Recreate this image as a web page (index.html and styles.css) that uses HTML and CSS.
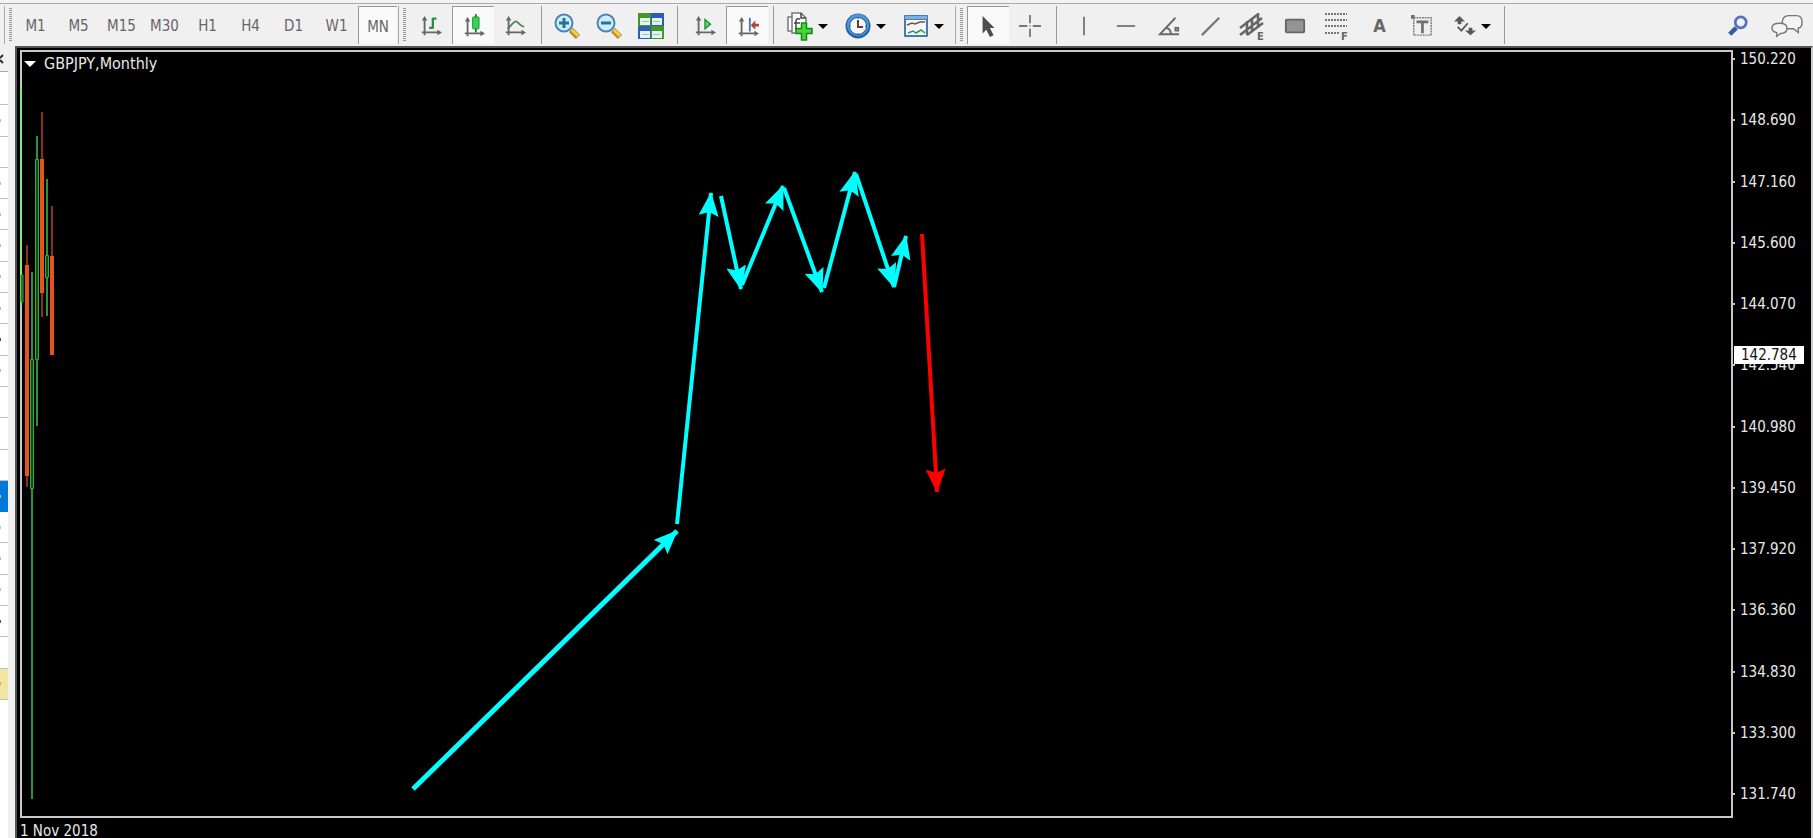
FILE: index.html
```html
<!DOCTYPE html>
<html lang="en">
<head>
<meta charset="utf-8">
<title>GBPJPY,Monthly</title>
<link rel="stylesheet" href="styles.css">
</head>
<body>
<header class="toolbar">
  <div class="grip"></div>
  <div class="group periods">
    <button>M1</button><button>M5</button><button>M15</button><button>M30</button><button>H1</button><button>H4</button><button>D1</button><button>W1</button><button class="pressed" aria-pressed="true">MN</button>
  </div>
  <div class="grip"></div>
  <div class="group charts">
    <button aria-label="Bar chart"><svg viewBox="0 0 24 24"><g class="axes"><path d="M5 22V5M2 19H20"/><path d="M5 1L2 6H8ZM24 19L19 16V22Z"/></g><path d="M14 3V15M14 4H18M10 14H14" stroke="#2e8b45" stroke-width="2.500" fill="none"/></svg></button>
    <button class="pressed" aria-pressed="true" aria-label="Candlesticks"><svg viewBox="0 0 24 24"><g class="axes"><path d="M5 22V5M2 19H20"/><path d="M5 1L2 6H8ZM24 19L19 16V22Z"/></g><path d="M14 -2V18" stroke="#1d7a2c" stroke-width="2"/><rect x="10.5" y="1" width="7" height="13" rx="1" fill="#35d552" stroke="#149029"/></svg></button>
    <button aria-label="Line chart"><svg viewBox="0 0 24 24"><g class="axes"><path d="M5 22V5M2 19H20"/><path d="M5 1L2 6H8ZM24 19L19 16V22Z"/></g><path d="M4 15C9 10 11 7 13 7S17 12 22 13" stroke="#508458" stroke-width="2" fill="none"/></svg></button>
    <div class="rule"></div>
    <button aria-label="Zoom in"><svg class="large" viewBox="0 0 26 26"><path d="M17 17L24 24" stroke="#b98a20" stroke-width="6"/><path d="M18 17L24 23" stroke="#f6cf50" stroke-width="3"/><circle cx="10" cy="10" r="8.5" fill="#c5f0ff" stroke="#5080b8" stroke-width="2"/><path d="M10 5V15M5 10H15" stroke="#356d96" stroke-width="3"/></svg></button>
    <button aria-label="Zoom out"><svg class="large" viewBox="0 0 26 26"><path d="M17 17L24 24" stroke="#b98a20" stroke-width="6"/><path d="M18 17L24 23" stroke="#f6cf50" stroke-width="3"/><circle cx="10" cy="10" r="8.5" fill="#c5f0ff" stroke="#5080b8" stroke-width="2"/><path d="M5 10H15" stroke="#356d96" stroke-width="3"/></svg></button>
    <button aria-label="Tile windows"><svg class="large" viewBox="0 0 26 26"><path d="M0 0H13V13H0ZM13 13H26V26H13Z" fill="#46952a"/><path d="M13 0H26V13H13ZM0 13H13V26H0Z" fill="#2d5eb4"/><path d="M2 5H12V12H2ZM14 5H24V12H14ZM2 18H12V25H2ZM14 18H24V25H14Z" fill="#e4f3ee"/><path d="M4 8.500H11M15 8.500H22M4 21.500H11M15 21.500H22" stroke="#9cc9b2"/></svg></button>
    <div class="rule wide"></div>
    <button aria-label="Auto scroll"><svg viewBox="0 0 24 24"><g class="axes"><path d="M5 22V5M2 19H20"/><path d="M5 1L2 6H8ZM24 19L19 16V22Z"/></g><path d="M12 5L18 10L12 15Z" fill="#58df70" stroke="#238b38" stroke-width="1.500"/></svg></button>
    <button class="pressed" aria-pressed="true" aria-label="Chart shift"><svg viewBox="0 0 24 24"><g class="axes"><path d="M5 22V5M2 19H20"/><path d="M5 1L2 6H8ZM24 19L19 16V22Z"/></g><path d="M14 2V17" stroke="#4479a3" stroke-width="2"/><path d="M15 10L20 5V8.500H24V11.500H20V15Z" fill="#ad4933"/></svg></button>
    <div class="rule"></div>
    <button class="drop" aria-label="Indicators"><svg class="large" viewBox="0 0 26 26"><path d="M5 4H1V18H5M5 0H14L19 5V20H5Z" fill="#fff" stroke="#777" stroke-width="1.500"/><path d="M14 0V5H19M13 6C9 5 9 7 9 9V17M7 10H13" fill="none" stroke="#444" stroke-width="1.500"/><path d="M14.500 10H19.500V15.500H25V20.500H19.500V27H14.500V20.500H9V15.500H14.500Z" fill="#41db34" stroke="#168916" stroke-width="1.500"/></svg><i class="caret"></i></button>
    <button class="drop" aria-label="Periods"><svg class="large" viewBox="0 0 26 26"><circle cx="13" cy="13" r="12.500" fill="#245fa9"/><circle cx="13" cy="12" r="11" fill="#4d97db"/><circle cx="13" cy="13" r="8.500" fill="#f4fbff" stroke="#1e5795"/><path d="M13 7V14H18" fill="none" stroke="#7d332c" stroke-width="2"/><path d="M13 5V6M13 20V21M5 13H6M20 13H21" stroke="#456" stroke-width="1"/></svg><i class="caret"></i></button>
    <button class="drop" aria-label="Templates"><svg class="large" viewBox="0 0 26 26"><rect x="1" y="2" width="24" height="22" rx="1" fill="#4a7ba8"/><path d="M2 3H24V6H2Z" fill="#78b1df"/><path d="M3 7H23V15H3ZM3 15H23V22H3Z" fill="#eef8ff"/><path d="M4 12L9 10L12 11L17 9L22 9" fill="none" stroke="#9b412b" stroke-width="1.500"/><path d="M5 20L10 18L13 20L18 17L22 20" fill="none" stroke="#448c52" stroke-width="1.500"/></svg><i class="caret"></i></button>
  </div>
  <div class="grip"></div>
  <div class="group cursors">
    <button class="pressed" aria-pressed="true" aria-label="Cursor"><svg viewBox="0 0 24 24"><path d="M5 0V19L9 15L13 23L17 21L13 13H18Z" fill="#4d4d4d"/></svg></button>
    <button aria-label="Crosshair"><svg viewBox="0 0 24 24"><path d="M12 0V9M12 15V24M0 12H9M15 12H24" stroke="#777" stroke-width="2"/><path d="M11 12H13" stroke="#777" stroke-width="1"/></svg></button>
    <div class="rule wide"></div>
  </div>
  <div class="group lines">
    <button aria-label="Vertical line"><svg viewBox="0 0 24 24"><path d="M12 2V22" stroke="#777" stroke-width="2"/></svg></button>
    <button aria-label="Horizontal line"><svg viewBox="0 0 24 24"><path d="M2 12H22" stroke="#777" stroke-width="2"/></svg></button>
    <button aria-label="Trendline by angle"><svg viewBox="0 0 24 24"><path d="M23 21H2L19 3M9 14Q14 15 14 21" fill="none" stroke="#686868" stroke-width="2"/><rect x="19" y="14" width="3" height="3" fill="none" stroke="#686868" stroke-width="2"/></svg></button>
    <button aria-label="Trendline"><svg viewBox="0 0 24 24"><path d="M2 22L21 3" stroke="#777" stroke-width="2.500"/></svg></button>
    <button aria-label="Equidistant channel"><svg class="large" viewBox="0 0 26 26"><path d="M0 15L17 2M0 22L22 5M7 22L23 10M7 8V22M12 5V19M18 0V15" fill="none" stroke="#666" stroke-width="2.500"/><text x="17" y="27" class="mark">E</text></svg></button>
    <button aria-label="Rectangle"><svg viewBox="0 0 24 24"><rect x="2" y="5" width="20" height="14" rx="1" fill="#949494" stroke="#666" stroke-width="2"/></svg></button>
    <button aria-label="Fibonacci retracement"><svg class="large" viewBox="0 0 26 26"><path d="M1 1H23M1 7H23M1 13H23M1 20H16" stroke="#777" stroke-width="2" stroke-dasharray="2 1"/><text x="17" y="27" class="mark">F</text></svg></button>
    <button class="letter">A</button>
    <button aria-label="Text label"><svg viewBox="0 0 24 24"><rect x="3" y="3" width="19" height="19" fill="none" stroke="#777" stroke-width="1.500" stroke-dasharray="2 1"/><path d="M0 0H4V4H0ZM6 6H19V9H14V20H11V9H6Z" fill="#717171"/></svg></button>
  </div>
  <button class="drop" aria-label="Arrows"><svg viewBox="0 0 24 24"><path d="M6 1L12 7H8V10H4V7H0ZM18 22L24 17H20V14H16V17H12Z" fill="#595959"/><path d="M4 13L8 17L15 9" stroke="#595959" stroke-width="2" fill="none"/></svg><i class="caret"></i></button>
  <div class="rule end"></div>
  <div class="tools">
    <button aria-label="Search"><svg viewBox="0 0 24 24"><path d="M10 14L3 21" stroke="#335e9f" stroke-width="5"/><circle cx="15" cy="8" r="6" fill="#edf2ff" stroke="#5673b9" stroke-width="3"/></svg></button>
    <button aria-label="Community"><svg class="chat" viewBox="0 0 34 24"><path d="M18 1H27Q33 1 33 8Q33 14 29 14L29 19L24 15H18Q12 14 12 8Q12 2 18 1Z" fill="#f4f4f4" stroke="#777" stroke-width="1.500"/><path d="M9 9Q17 9 17 14.500Q17 20 10 20L6 23V19Q1 18 1 14.500Q1 9 9 9Z" fill="#f4f4f4" stroke="#777" stroke-width="1.500"/></svg></button>
  </div>
</header>
<main class="workspace">
  <aside class="watch">
    <div class="watch-head"><button class="close" aria-label="Close"><svg viewBox="0 0 4 8"><path d="M0 3L3 0M0 5L3 8" stroke="#333" stroke-width="2"/></svg></button></div>
    <div class="rows">
      <div></div><div class="bit"></div><div></div><div class="bit"></div><div class="bit"></div><div class="bit"></div><div class="bit"></div><div class="bit"></div><div class="bit dark"></div><div class="bit"></div><div></div><div></div><div></div><div class="bit selected"></div><div class="bit green"></div><div class="bit"></div><div class="bit green"></div><div class="bit dark"></div><div></div><div class="bit yellow"></div>
    </div>
    <div class="blank"></div>
  </aside>
  <section class="chart">
    <div class="plot">
      <h1 class="symbol"><i class="caret light"></i>GBPJPY,Monthly</h1>
      <svg class="drawing" viewBox="22 52 1709 764" preserveAspectRatio="xMinYMin meet" role="img" aria-label="Candles and price path">
        <defs>
          <marker id="up" markerUnits="userSpaceOnUse" markerWidth="26" markerHeight="22" refX="23" refY="10" orient="auto"><path d="M24 10L0 0L4 10L0 20Z" fill="#0ff"/></marker>
          <marker id="down" markerUnits="userSpaceOnUse" markerWidth="26" markerHeight="22" refX="23" refY="10" orient="auto"><path d="M24 10L0 0L4 10L0 20Z" fill="#f00"/></marker>
        </defs>
        <path d="M21 87V307" stroke="#7eea80" stroke-width="2"/>
        <g class="bull">
          <path d="M32 272V359M32 488V799M37 136V159M37 359V426M47 179V255M47 277V316"/>
          <path class="body" d="M21 275H23V302H21ZM30.500 359.500H33.500V488.500H30.500ZM35.500 159.500H38.500V359.500H35.500ZM45.500 255.500H48.500V277.500H45.500Z"/>
        </g>
        <g class="bear">
          <path d="M27 245V265M27 476V487M42 112V159M42 293V317M52 206V256"/>
          <path class="body" d="M25 265H29V476H25ZM40 159H44V293H40ZM50 256H54V355H50Z"/>
        </g>
        <g class="rise">
          <path class="bold" d="M413 789L677 531"/>
          <path d="M677 524L711 193"/><path d="M721 196L741 289"/><path d="M742 285L783 186"/><path d="M784 188L822 292"/><path d="M824 288L855 172"/><path d="M856 174L894 287"/><path d="M894 287L906 236"/>
        </g>
        <path class="fall" d="M922 234L937 492"/>
      </svg>
    </div>
    <div class="axis">
      <span>150.220</span><span>148.690</span><span>147.160</span><span>145.600</span><span>144.070</span><span>142.540</span><span>140.980</span><span>139.450</span><span>137.920</span><span>136.360</span><span>134.830</span><span>133.300</span><span>131.740</span>
      <strong class="current">142.784</strong>
    </div>
    <div class="dates">1 Nov 2018</div>
  </section>
</main>
</body>
</html>
```
FILE: styles.css
```css
* { box-sizing: border-box; }
body {
  margin: 0;
  height: 100vh;
  display: flex;
  flex-direction: column;
  overflow: hidden;
  background: #f0f0f0;
  font: 15px/18px "DejaVu Sans Condensed", "Noto Sans", sans-serif;
}
button {
  margin: 0;
  padding: 0;
  border: 0;
  background: none;
  font: inherit;
  color: #666;
  flex: none;
  display: flex;
  align-items: center;
  justify-content: center;
}
svg { display: block; overflow: visible; flex: none; }

.toolbar {
  height: 46px;
  flex: none;
  display: flex;
  padding: 6px 8px 2px 4px;
  background: linear-gradient(#f3f3f3 3px, #aaa 3px, #aaa 4px, #f0f0f0 4px);
}
.toolbar button { padding-top: 2px; }
.toolbar svg { width: 22px; height: 22px; }
.toolbar svg.large { width: 26px; height: 26px; }
.toolbar svg.chat { width: 32px; height: 24px; }
.group { display: flex; flex: none; }
.grip {
  width: 10px;
  flex: none;
  border-left: 1px solid #aaa;
  background: repeating-linear-gradient(#999 0 1px, #eee 1px 2px) 4px 2px / 3px 34px no-repeat;
}
.pressed {
  background: #fafafa;
  border-top: 1px solid #999;
  border-left: 1px solid #999;
}
.periods { padding-right: 1px; }
.periods button { width: 43px; }
.periods .pressed { width: 39px; }
.charts { padding: 0 3px 0 2px; }
.charts button, .cursors button { width: 42px; }
.cursors { padding-left: 2px; }
.lines { width: 380px; }
.lines button { flex: 1; }
.group .drop, .drop { width: 58px; gap: 5px; }
.letter { font-size: 18px; font-weight: bold; }
.rule {
  width: 10px;
  flex: none;
  background: linear-gradient(#999, #999) 5px 0 / 1px 100% no-repeat;
}
.rule.wide { width: 12px; }
.rule.end { background-position: 3px 0; }
.caret {
  border: 5px solid transparent;
  border-top-color: #000;
  border-bottom: 0;
}
.axes path { fill: #666; stroke: #666; stroke-width: 2; }
.axes path + path { stroke: none; }
.mark { font-size: 11px; font-weight: bold; fill: #666; }
.tools { margin-left: auto; display: flex; gap: 22px; padding-right: 2px; }

.workspace { flex: 1; display: flex; min-height: 0; }
.watch {
  width: 15px;
  flex: none;
  display: flex;
  flex-direction: column;
  padding-right: 7px;
  background: #f0f0f0;
}
.watch-head { height: 26px; flex: none; border-bottom: 1px solid #aaa; }
.close { height: 26px; }
.close svg { width: 4px; height: 8px; }
.rows { flex: 626; display: flex; flex-direction: column; padding-top: 2px; background: #fff; }
.rows div {
  flex: 1;
  display: flex;
  align-items: center;
  border-bottom: 1px solid #c0c0c0;
}
.bit::before { content: ""; width: 1px; height: 3px; background: #bbb; }
.dark::before { background: #555; }
.green::before { background: #8dc; }
.rows .selected { background: #0078d7; border-color: #0078d7; }
.rows .yellow { background: #f0e6a0; }
.yellow::before { background: #d99; }
.blank { flex: 138; background: #fff; }

.chart {
  flex: 1;
  display: grid;
  grid-template: minmax(0, 1fr) 20px / minmax(0, 1fr) 78px;
  padding-top: 2px;
  padding-left: 3px;
  background: #000;
  border: solid #555;
  border-width: 2px 2px 0;
  border-right-color: #ccc;
  color: #e8e8e8;
}
.plot { position: relative; border: 2px solid #c8c8c8; }
.symbol {
  position: absolute;
  left: 2px;
  top: 3px;
  margin: 0;
  display: flex;
  align-items: center;
  gap: 8px;
  font-size: 16px;
  font-weight: normal;
}
.light { border-width: 6px 6px 0; border-top-color: #fff; }
.drawing { width: 100%; height: 100%; }
.bull path { fill: none; stroke: #2f9238; stroke-width: 2; }
.bull .body { fill: #0a5210; stroke: #38a83e; stroke-width: 1; }
.bear path { fill: none; stroke: #8c3020; stroke-width: 2; }
.bear .body { fill: #e8521c; stroke: none; }
.rise path { fill: none; stroke: #0ff; stroke-width: 4; marker-end: url(#up); }
.rise .bold { stroke-width: 5; }
.fall { stroke: #f00; stroke-width: 4; marker-end: url(#down); }
.axis {
  position: relative;
  display: flex;
  flex-direction: column;
  justify-content: space-between;
  padding-bottom: 15px;
}
.axis span { display: flex; align-items: center; gap: 5px; }
.axis span::before { content: ""; width: 2px; height: 2px; background: #c8c8c8; }
.current {
  position: absolute;
  left: 1px;
  top: 296px;
  padding: 0 7px;
  background: #fff;
  color: #111;
  font-weight: normal;
}
.dates {
  align-self: end;
  line-height: 14px;
}
```
